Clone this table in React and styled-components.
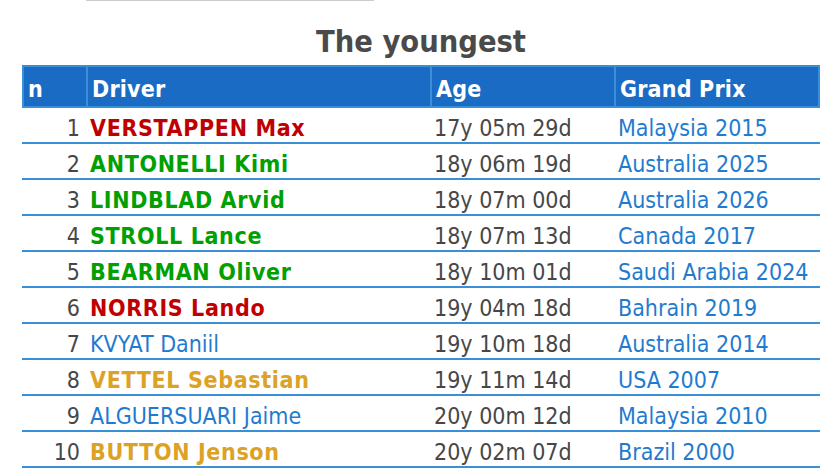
import React from 'react'
import styled, { createGlobalStyle } from 'styled-components'

const GlobalStyle = createGlobalStyle`
    body {
        margin : 0;
        background : #fff;
        font-family : "DejaVu Sans Condensed", "Liberation Sans", sans-serif;
    }
`

const drivers = [
    { n: 1, name: 'VERSTAPPEN Max', tone: 'red', age: '17y 05m 29d', gp: 'Malaysia 2015' },
    { n: 2, name: 'ANTONELLI Kimi', tone: 'green', age: '18y 06m 19d', gp: 'Australia 2025' },
    { n: 3, name: 'LINDBLAD Arvid', tone: 'green', age: '18y 07m 00d', gp: 'Australia 2026' },
    { n: 4, name: 'STROLL Lance', tone: 'green', age: '18y 07m 13d', gp: 'Canada 2017' },
    { n: 5, name: 'BEARMAN Oliver', tone: 'green', age: '18y 10m 01d', gp: 'Saudi Arabia 2024' },
    { n: 6, name: 'NORRIS Lando', tone: 'red', age: '19y 04m 18d', gp: 'Bahrain 2019' },
    { n: 7, name: 'KVYAT Daniil', tone: 'blue', age: '19y 10m 18d', gp: 'Australia 2014' },
    { n: 8, name: 'VETTEL Sebastian', tone: 'gold', age: '19y 11m 14d', gp: 'USA 2007' },
    { n: 9, name: 'ALGUERSUARI Jaime', tone: 'blue', age: '20y 00m 12d', gp: 'Malaysia 2010' },
    { n: 10, name: 'BUTTON Jenson', tone: 'gold', age: '20y 02m 07d', gp: 'Brazil 2000' },
]

// colour + weight for each kind of driver name
const tones = {
    red : { color: '#c00000', weight: 700 },
    green : { color: '#00a000', weight: 700 },
    gold : { color: '#dca226', weight: 700 },
    blue : { color: '#1f7bd0', weight: 400 },
}

function App(){
    return(
        <Page>
            <GlobalStyle />
            <TopRule />
            <Title>The youngest</Title>
            <Table>
                <colgroup>
                    <col style={{ width: 64 }} />
                    <col style={{ width: 344 }} />
                    <col style={{ width: 184 }} />
                    <col style={{ width: 206 }} />
                </colgroup>
                <thead>
                    <tr>
                        <Th>n</Th>
                        <Th>Driver</Th>
                        <Th>Age</Th>
                        <Th $last>Grand Prix</Th>
                    </tr>
                </thead>
                <tbody>
                    {drivers.map((d) => (
                        <tr key={d.n}>
                            <NumCell>{d.n}</NumCell>
                            <DriverCell $tone={d.tone}>{d.name}</DriverCell>
                            <Td>{d.age}</Td>
                            <GpCell>{d.gp}</GpCell>
                        </tr>
                    ))}
                </tbody>
            </Table>
        </Page>
    )
}

export default App

const Page = styled.div`
    width : 798px;
    padding-left : 22px;
`
const TopRule = styled.div`
    width : 288px;
    margin-left : 64px;
    border-top : 1px solid #cccccc;
`
const Title = styled.h1`
    margin : 22px 0 5px 0;
    font-size : 30.5px;
    line-height : 37px;
    font-weight : 700;
    color : #4a4a4a;
    text-align : center;
`
const Table = styled.table`
    width : 798px;
    table-layout : fixed;
    border-collapse : separate;
    border-spacing : 0;
    font-size : 23px;
    line-height : 26px;
`
const Th = styled.th`
    background : #1a6bc4;
    color : #fff;
    font-weight : 700;
    text-align : left;
    padding : 9px 4px 4px 4px;
    letter-spacing : 0.2px;
    border-top : 2px solid #3a8fd9;
    border-bottom : 2px solid #3a8fd9;
    border-left : 2px solid #3a8fd9;
    border-right : ${(p) => (p.$last ? '2px solid #3a8fd9' : '0')};
    white-space : nowrap;
`
const Td = styled.td`
    padding : 7px 4px 1px 4px;
    border-bottom : 2px solid #3a8fd9;
    color : #474747;
    white-space : nowrap;
`
const NumCell = styled(Td)`
    text-align : right;
    padding-right : 6px;
`
const DriverCell = styled(Td)`
    color : ${(p) => tones[p.$tone].color};
    font-weight : ${(p) => tones[p.$tone].weight};
    letter-spacing : ${(p) => (tones[p.$tone].weight === 700 ? '0.65px' : '0')};
`
const GpCell = styled(Td)`
    color : #1f7bd0;
`
